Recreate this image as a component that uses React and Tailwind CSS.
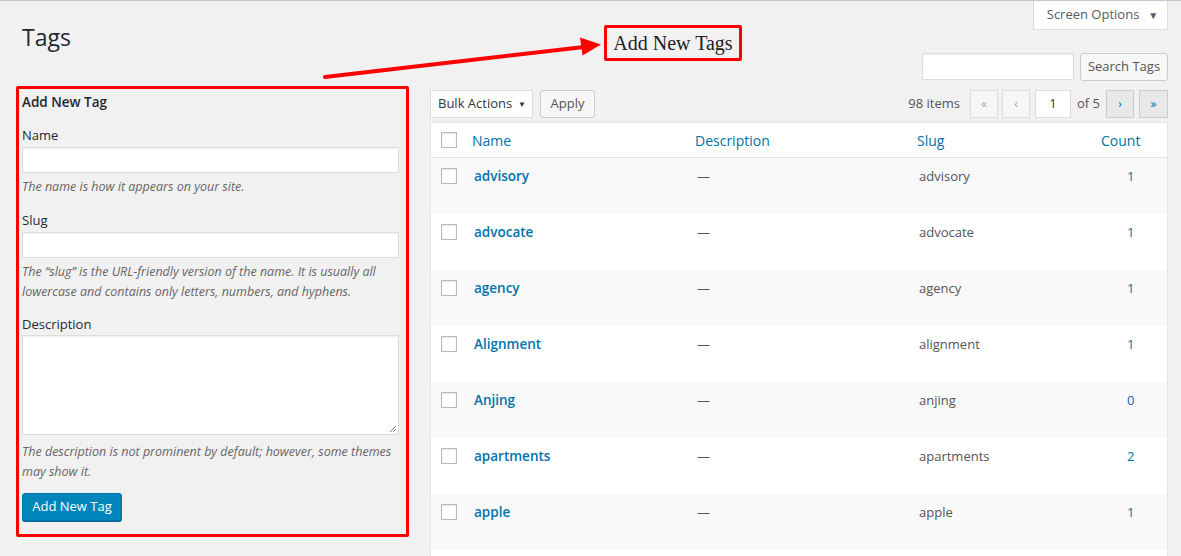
import React from "react";

const rows = [
  { name: "advisory", slug: "advisory", count: "1" },
  { name: "advocate", slug: "advocate", count: "1" },
  { name: "agency", slug: "agency", count: "1" },
  { name: "Alignment", slug: "alignment", count: "1" },
  { name: "Anjing", slug: "anjing", count: "0" },
  { name: "apartments", slug: "apartments", count: "2" },
  { name: "apple", slug: "apple", count: "1" },
];

function Checkbox() {
  return <div className="w-4 h-4 border border-[#b4b9be] bg-white shadow-[inset_0_1px_2px_rgba(0,0,0,0.1)]" />;
}

export default function App() {
  return (
    <div
      className="relative w-[1181px] h-[556px] overflow-hidden bg-[#f1f1f1] border-t border-[#c8c8c8] text-[13px] text-[#444]"
      style={{ fontFamily: '"Open Sans", "Noto Sans", sans-serif' }}
    >
      {/* Top row */}
      <div className="flex h-[52px] items-start justify-between">
        <h1 className="pl-[22px] pt-[22px] text-[23px] leading-[29px] font-normal text-[#23282d]">Tags</h1>
        <div className="mr-[13px] flex h-[29px] w-[135px] items-center justify-center gap-[9px] border-x border-b border-[#ddd] bg-white pl-[4px] text-[13px] text-[#555d66]">
          <span>Screen Options</span>
          <span className="text-[10px] leading-none">▼</span>
        </div>
      </div>

      {/* Body */}
      <div className="flex">
        {/* Left form */}
        <div className="ml-[16px] mt-[33px] w-[393px] h-[451px] border-[3px] border-[#ff0000] rounded-[2px] pl-[3px] pr-[7px] pt-[3px]">
          <h2 className="text-[13.5px] leading-[20px] font-semibold text-[#23282d]">Add New Tag</h2>
          <div className="mt-[14px] leading-[18px] text-[#23282d]">Name</div>
          <div className="mt-[3px] h-[26px] border border-[#ddd] bg-white shadow-[inset_0_1px_2px_rgba(0,0,0,0.07)]" />
          <p className="mt-[4px] text-[12.5px] leading-[20px] italic text-[#666]">The name is how it appears on your site.</p>
          <div className="mt-[14px] leading-[18px] text-[#23282d]">Slug</div>
          <div className="mt-[3px] h-[26px] border border-[#ddd] bg-white shadow-[inset_0_1px_2px_rgba(0,0,0,0.07)]" />
          <p className="mt-[4px] text-[12.5px] leading-[20px] italic text-[#666]">
            The “slug” is the URL-friendly version of the name. It is usually all lowercase and contains only letters, numbers, and hyphens.
          </p>
          <div className="mt-[13px] leading-[18px] text-[#23282d]">Description</div>
          <div className="relative mt-[2px] h-[100px] border border-[#ddd] bg-white shadow-[inset_0_1px_2px_rgba(0,0,0,0.07)]">
            <svg className="absolute right-[1px] bottom-[1px]" width="9" height="9" viewBox="0 0 9 9">
              <path d="M8 2 L2 8 M8 5 L5 8" stroke="#888" strokeWidth="1" />
            </svg>
          </div>
          <p className="mt-[7px] text-[12.5px] leading-[20px] italic text-[#666]">
            The description is not prominent by default; however, some themes may show it.
          </p>
          <button className="mt-[11px] h-[28px] w-[100px] rounded-[3px] border border-[#0073aa] bg-[#0085ba] text-[13px] text-white shadow-[0_1px_0_#006799]">
            Add New Tag
          </button>
        </div>

        {/* Right column */}
        <div className="ml-[21px] w-[738px]">
          <div className="flex justify-end gap-[6px]">
            <div className="h-[27px] w-[152px] border border-[#ddd] bg-white shadow-[inset_0_1px_2px_rgba(0,0,0,0.07)]" />
            <button className="h-[28px] w-[88px] rounded-[3px] border border-[#ccc] bg-[#f7f7f7] text-[13px] text-[#555]">Search Tags</button>
          </div>
          <div className="mt-[9px] flex h-[28px] items-center">
            <div className="flex h-[28px] w-[103px] items-center justify-between border border-[#ddd] bg-white pl-[7px] pr-[6px] text-[#32373c]">
              <span>Bulk Actions</span>
              <span className="text-[8px] leading-none">▼</span>
            </div>
            <button className="ml-[7px] h-[28px] w-[55px] rounded-[3px] border border-[#ccc] bg-[#f7f7f7] text-[13px] text-[#555]">Apply</button>
            <div className="ml-auto flex items-center">
              <span className="mr-[10px] text-[#555]">98 items</span>
              <div className="flex h-[28px] w-[28px] items-center justify-center border border-[#ddd] bg-[#f7f7f7] text-[#a0a5aa] text-[12px]">«</div>
              <div className="ml-[4px] flex h-[28px] w-[28px] items-center justify-center border border-[#ddd] bg-[#f7f7f7] text-[#a0a5aa] text-[12px]">‹</div>
              <div className="ml-[5px] flex h-[28px] w-[36px] items-center justify-center border border-[#ddd] bg-white text-[#32373c]">1</div>
              <span className="ml-[6px] text-[#555]">of 5</span>
              <div className="ml-[6px] flex h-[28px] w-[28px] items-center justify-center border border-[#ccc] bg-[#e8e8e8] text-[#0073aa] text-[12px]">›</div>
              <div className="ml-[5px] flex h-[28px] w-[29px] items-center justify-center border border-[#ccc] bg-[#e8e8e8] text-[#0073aa] text-[12px]">»</div>
            </div>
          </div>

          {/* Table */}
          <div className="mt-[4px] border border-[#e5e5e5] bg-white">
            <div className="grid h-[35px] grid-cols-[33px_223px_222px_171px_87px] items-center border-b border-[#e1e1e1] text-[14px] text-[#0073aa]">
              <div className="pl-[10px]"><Checkbox /></div>
              <div className="pl-[8px]">Name</div>
              <div className="pl-[8px]">Description</div>
              <div className="pl-[8px]">Slug</div>
              <div className="pl-[21px]">Count</div>
            </div>
            {rows.map((r, i) => (
              <div
                key={r.name}
                className={`grid h-[56px] grid-cols-[33px_223px_222px_171px_87px] items-start pt-[8px] ${i % 2 === 0 ? "bg-[#f9f9f9]" : "bg-white"}`}
              >
                <div className="pl-[10px] pt-[2px]"><Checkbox /></div>
                <div className="pl-[10px] text-[13.5px] font-semibold leading-[20px] text-[#0073aa]">{r.name}</div>
                <div className="pl-[10px] leading-[20px] text-[#555]">—</div>
                <div className="pl-[10px] leading-[20px] text-[#555]">{r.slug}</div>
                <div className="pl-[47px] leading-[20px] text-[#0073aa]">{r.count}</div>
              </div>
            ))}
            <div className="h-[56px] bg-white" />
          </div>
        </div>
      </div>

      {/* Annotation */}
      <div className="absolute left-[604px] top-[24px] flex h-[36px] w-[138px] items-center justify-center border-[3px] border-[#ff0000] rounded-[2px] text-[20px] text-[#222]" style={{ fontFamily: '"Liberation Serif", serif' }}>
        Add New Tags
      </div>
      <svg className="absolute left-0 top-0 pointer-events-none" width="1181" height="556">
        <line x1="325" y1="76" x2="584" y2="46" stroke="#ff0000" strokeWidth="4" strokeLinecap="round" />
        <polygon points="601,43.5 582.5,54.5 580,36.5" fill="#ff0000" />
      </svg>
    </div>
  );
}
